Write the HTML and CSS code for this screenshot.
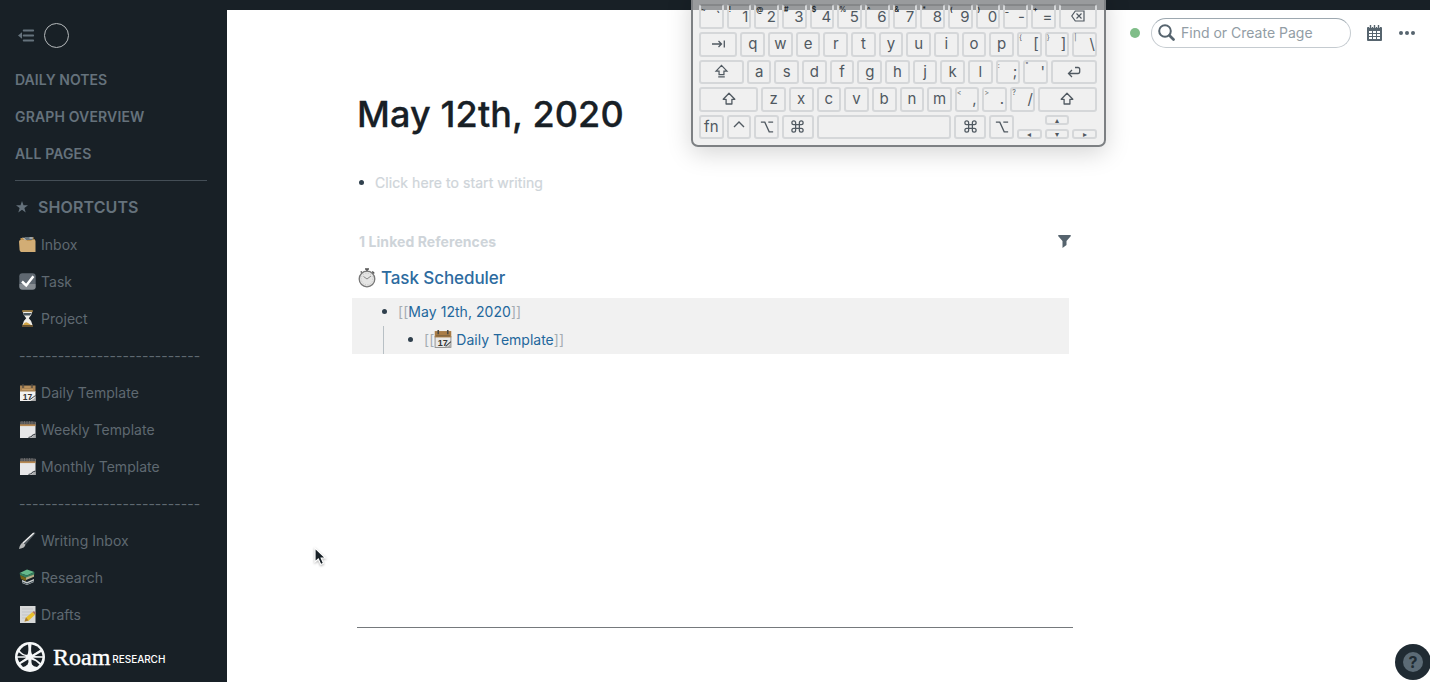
FILE: index.html
```html
<!DOCTYPE html>
<html lang="en">
<head>
<meta charset="utf-8">
<title>May 12th, 2020</title>
<link rel="stylesheet" href="styles.css">
</head>
<body>
<svg class="defs" width="0" height="0">
  <symbol id="notepad-emoji" viewBox="0 0 17 17">
    <rect x="1" y="1" width="15.500" height="16" fill="#e7e7e8"/><path d="M1 .5h15.500v4H1z" fill="#555556"/><path d="M1 4.200h15.500" stroke="#b88a53" stroke-width="1.800"/>
    <path d="M3 0v3M5.500 0v3M8 0v3M10.500 0v3M13 0v3" stroke="#777" stroke-width=".7"/><path d="M11 17q3-1 5.500-4v4z" fill="#a7a9ab"/><path d="M9.500 16.500q3-.5 4.500-2.500l2.500-1" fill="none" stroke="#3f444a" stroke-width="1.100"/>
  </symbol>
  <symbol id="key-option" viewBox="0 0 16 16"><path d="M1 2.500h4.500l5 11H15M9.500 2.500H15" fill="none" stroke="currentColor" stroke-width="1.500"/></symbol>
  <symbol id="key-command" viewBox="0 0 16 16"><path d="M6 4v8a2 2 0 1 1-2-2h8a2 2 0 1 1-2 2V4a2 2 0 1 1 2 2H4a2 2 0 1 1 2-2z" fill="none" stroke="currentColor" stroke-width="1.350"/></symbol>
  <symbol id="key-shift" viewBox="0 0 16 16"><path d="M8 2.200l5.800 6.100h-2.900v4.700H5.100V8.300H2.200z" fill="none" stroke="currentColor" stroke-width="1.300" stroke-linejoin="round"/></symbol>
</svg>
<div class="app">
  <aside class="sidebar">
    <div class="sidebar-tools">
      <svg width="17" height="13" viewBox="0 0 17 13"><path d="M5.700 1.500h9.500M5.700 6.500h9.500M5.700 11.500h9.500" stroke="#65727c" stroke-width="1.900" stroke-linecap="round"/><path d="M0 6.500L4 3.200v6.600z" fill="#65727c"/></svg>
      <span class="avatar"></span>
    </div>
    <nav class="primary"><a class="tight">DAILY NOTES</a><a>GRAPH OVERVIEW</a><a>ALL PAGES</a></nav>
    <div class="shortcuts-title"><svg width="12" height="12" viewBox="0 0 12 12"><path d="M6 0l1.500 4.200H12L8.400 6.900 9.700 11.400 6 8.700l-3.700 2.700 1.300-4.500L0 4.200h4.500z" fill="#65727c"/></svg><span>SHORTCUTS</span></div>
    <nav class="shortcuts">
      <a><svg viewBox="0 0 17 17"><path d="M1.500 6V2h4l1-1h8v2.200h1.500V7z" fill="#be9250"/><path d="M5.500 1h8v3h-8z" fill="#63717a"/><path d="M4 1.500l3 3M10.500 2h3" stroke="#ddd"/><path d="M0 5.500Q0 4 1.500 4H6l1 1h5l1-1h2.500q1 0 1 1v11H2Q.7 15 .6 14z" fill="#d2ad75"/></svg><span>Inbox</span></a>
      <a><svg viewBox="0 0 17 17"><rect x=".3" y=".3" width="16.400" height="16.400" rx="3" fill="#5f6871"/><path d="M.5 11h16v3q0 2.500-3 2.500h-10q-3 0-3-3z" fill="#858b91"/><path d="M3 8.500l4.200 4L14.400 3.200" fill="none" stroke="#fff" stroke-width="2.500"/></svg><span>Task</span></a>
      <a><svg viewBox="0 0 17 17"><path d="M3 .2h11v2H3zM3 15h11v2H3z" fill="#685331"/><path d="M4 2h9q0 3-3.200 6.300Q13 11 13.500 15h-10q.5-4 3.700-6.700Q4 5 4 2z" fill="#efede8"/><path d="M4.500 3l8 0-1.500 2.500-6 0z" fill="#4d5a61"/><path d="M4 15q2-4 5-2l3 2z" fill="#d1a442"/><path d="M3.500 1h10" stroke="#cca95f"/></svg><span>Project</span></a>
      <a class="dashes">----------------------------</a>
      <a><svg viewBox="0 0 17 17"><rect x="1" y="7" width="15.500" height="10" fill="#f3f2f0"/><rect x="1" y="1.500" width="15.500" height="6" fill="#a98455"/><path d="M4 0v4M13 0v4" stroke="#4b4842" stroke-width="1.300"/><path d="M6 3h5M3 5.500h11" stroke="#c59c66"/><text x="3.800" y="15.500" class="date-number">17</text><path d="M12 16.500q3-1 4.500-4v4.500h-5z" fill="#aaa"/><path d="M11 15.500l5.500-4" stroke="#444" stroke-width="1"/></svg><span>Daily Template</span></a>
      <a><svg><use href="#notepad-emoji"/></svg><span>Weekly Template</span></a>
      <a><svg><use href="#notepad-emoji"/></svg><span>Monthly Template</span></a>
      <a class="dashes">----------------------------</a>
      <a><svg viewBox="0 0 17 17"><path d="M0 17Q1 11.500 4 10.500l2.500 2Q6 16 0 17z" fill="#b5b7b7"/><path d="M4 10.500L15.500 0l1 1.300L6.500 12.800z" fill="#555d62"/><path d="M4 11L14.800 1" stroke="#eee" stroke-width="1.500"/></svg><span>Writing Inbox</span></a>
      <a><svg viewBox="0 0 17 17"><path d="M.7 4L8 .4l7.300 2.500L8 6.500z" fill="#65b98a"/><path d="M.7 4L8 6.500l7.300-3.600v2.600L7 9 1 6z" fill="#347f5d"/><path d="M1 6l6 3v3L2 10z" fill="#766516"/><path d="M7 8.500l8-3v2.300L7 11z" fill="#b4ad86"/><path d="M3 11l5 2 7-3v3l-7 3-5-2z" fill="#c8cccc"/><path d="M3 13l5 2 7-3" fill="none" stroke="#46545b"/></svg><span>Research</span></a>
      <a><svg viewBox="0 0 17 17"><path d="M1 0h15.500v17H1z" fill="#d7d8d8"/><path d="M3 3h11M3 6h11M3 9h8M3 12h4" stroke="#babfc2" stroke-width=".7"/><path d="M5.500 15.500l1.500-4L13.500 6l2.500 2.700-6.500 6z" fill="#e8bf2d"/><path d="M13.500 6l1.500-1 2 2-1 1.700z" fill="#ab7167"/><path d="M5.500 15.500l1.500-4 2.500 3z" fill="#a67b39"/></svg><span>Drafts</span></a>
    </nav>
    <footer class="brand">
      <svg width="30" height="30" viewBox="0 0 30 30"><circle cx="15" cy="15" r="15" fill="#f5f7f8"/><g fill="#182026"><path d="M13 2.500Q14 9 12.500 12.500 9 13.500 4.800 8.800 7.800 4 13 2.500z"/><path d="M16.500 2.500q5.500 1 8.800 5.300l-8 5q-1.900-3-.8-10.300z"/><path d="M3.800 10.300q3.700 3.700 7.200 3.900H2.400q.2-2 1.400-3.900z"/><path d="M26.300 10q1 2 1.200 4.300L19.500 14z"/><path d="M2.600 15.800h8.600L4.500 20.500Q3 18.500 2.600 15.800z"/><path d="M18 15.800h9.400q-.3 2.700-1.700 5.200Q21 17 18 15.800z"/><path d="M5.500 22l7.700-4.500q1 2.500-.7 5-2 2.300-4.500 2.500z"/><path d="M16.500 17.500q4.500 1 8 5l-2.500 2.500q-3.500-.5-5-2.500-.9-2-.5-5z"/></g><path d="M4 21.500L26 8.500" stroke="#f5f7f8" stroke-width="1.400"/></svg>
      <span class="roam">Roam</span><span class="research">RESEARCH</span>
    </footer>
  </aside>
  <main class="page">
    <header class="topbar">
      <i class="sync-dot"></i>
      <div class="search"><svg width="17" height="17" viewBox="0 0 17 17" fill="none" stroke="#56646e"><circle cx="7" cy="7" r="5.800" stroke-width="2"/><path d="M11.500 11.500l4 4" stroke-width="2.700" stroke-linecap="round"/></svg><span>Find or Create Page</span></div>
      <svg class="calendar-icon" width="15" height="16" viewBox="0 0 15 16"><path d="M0 3q0-1 1-1h13q1 0 1 1v12q0 1-1 1H1q-1 0-1-1z" fill="#56646e"/><path d="M3.500 0v3M7.500 0v3M11.500 0v3" stroke="#fff" stroke-width="2.600"/><path d="M3.500 0v3M7.500 0v3M11.500 0v3" stroke="#56646e" stroke-width="1.400"/><path d="M2 6h3v2H2zM6 6h3v2H6zM10 6h3v2h-3zM2 9h3v2H2zM6 9h3v2H6zM10 9h3v2h-3zM2 12h3v2H2zM6 12h3v2H6zM10 12h3v2h-3z" fill="#fff"/></svg>
      <svg class="more" width="16" height="4" viewBox="0 0 16 4" fill="#56646e"><circle cx="2" cy="2" r="2"/><circle cx="8" cy="2" r="2"/><circle cx="14" cy="2" r="2"/></svg>
    </header>
    <article class="note">
      <h1>May 12th, 2020</h1>
      <div class="placeholder"><i class="bullet"></i><span>Click here to start writing</span></div>
      <div class="refs-title"><span>1 Linked References</span><svg width="13" height="13" viewBox="0 0 13 13"><path d="M.7 0h11.600q.9.300.4 1.200L8.500 6v4l-4 3V6L.3 1.200Q-.2.300.7 0z" fill="#56646e"/></svg></div>
      <h2><svg width="18" height="20" viewBox="0 0 18 20"><path d="M7 1h4M9 1v3M14.200 3.500l2 2M3.800 3.500l-1 1" stroke="#555" stroke-width="1.700"/><circle cx="9" cy="11" r="7.800" fill="#e5e5e4" stroke="#777" stroke-width="1.300"/><circle cx="9" cy="11" r="5.800" fill="none" stroke="#bbb" stroke-width=".8" stroke-dasharray="1 1.500"/><path d="M5.500 8.500L9 11l4-3" fill="none" stroke="#888"/></svg><span>Task Scheduler</span></h2>
      <div class="references">
        <div class="reference"><i class="bullet"></i><span><b>[[</b>May 12th, 2020<b>]]</b></span></div>
        <div class="reference child"><i class="bullet"></i><span class="linked"><b>[[</b><svg width="18" height="18" viewBox="0 0 17 17"><rect x="1" y="6" width="15" height="10.500" fill="#e9e8e6" stroke="#777" stroke-width=".7"/><rect x=".7" y="1" width="15.600" height="6" fill="#a97c46"/><path d="M4 0v4M13 0v4" stroke="#4b4842" stroke-width="1.500"/><path d="M2 5.500h13" stroke="#79613f"/><text x="3.500" y="15" class="date-number">17</text><path d="M11 16.500q3-1 5-4v4z" fill="#aaa"/><path d="M11 15.500l5-4.500" stroke="#444" stroke-width="1"/></svg><span>Daily Template</span><b>]]</b></span></div>
      </div>
    </article>
    <hr class="divider">
  </main>
</div>

<section class="keyboard">
  <div class="row numbers"><kbd class="sym"><sup>~</sup>`</kbd><kbd class="sym"><sup>!</sup>1</kbd><kbd class="sym"><sup>@</sup>2</kbd><kbd class="sym"><sup>#</sup>3</kbd><kbd class="sym"><sup>$</sup>4</kbd><kbd class="sym"><sup>%</sup>5</kbd><kbd class="sym"><sup>^</sup>6</kbd><kbd class="sym"><sup>&amp;</sup>7</kbd><kbd class="sym"><sup>*</sup>8</kbd><kbd class="sym"><sup>(</sup>9</kbd><kbd class="sym"><sup>)</sup>0</kbd><kbd class="sym"><sup>_</sup>-</kbd><kbd class="sym"><sup>+</sup>=</kbd><kbd class="fill"><svg width="14" height="12" viewBox="0 0 14 12" fill="none" stroke="currentColor" stroke-width="1.200"><path d="M4.300 1H13v10H4.300L.8 6zM5.500 3.500l5 5M10.500 3.500l-5 5"/></svg></kbd></div>
  <div class="row"><kbd class="fill"><svg width="15" height="12" viewBox="0 0 15 12" fill="none" stroke="currentColor" stroke-width="1.300"><path d="M1 6h9M7.500 3l3 3-3 3M13.300 2.500v7"/></svg></kbd><kbd>q</kbd><kbd>w</kbd><kbd>e</kbd><kbd>r</kbd><kbd>t</kbd><kbd>y</kbd><kbd>u</kbd><kbd>i</kbd><kbd>o</kbd><kbd>p</kbd><kbd class="sym"><sup>{</sup>[</kbd><kbd class="sym"><sup>}</sup>]</kbd><kbd class="sym edge"><sup>|</sup>\</kbd></div>
  <div class="row"><kbd class="fill"><svg width="15" height="15" viewBox="0 0 16 16" fill="none" stroke="currentColor" stroke-width="1.300"><path d="M8 1.500l5.800 6h-3.200v3.800H5.400V7.500H2.200zM4.500 13.800h7"/></svg></kbd><kbd>a</kbd><kbd>s</kbd><kbd>d</kbd><kbd>f</kbd><kbd>g</kbd><kbd>h</kbd><kbd>j</kbd><kbd>k</kbd><kbd>l</kbd><kbd class="sym"><sup>:</sup>;</kbd><kbd class="sym"><sup>"</sup>'</kbd><kbd class="return"><svg width="14" height="12" viewBox="0 0 14 12" fill="none" stroke="currentColor" stroke-width="1.300"><path d="M5 4L1.500 7.500 5 11M2 7.500h9q1.700 0 1.700-2V3q0-1.500-1.700-1.500H8"/></svg></kbd></div>
  <div class="row"><kbd class="fill"><svg width="16" height="16"><use href="#key-shift"/></svg></kbd><kbd>z</kbd><kbd>x</kbd><kbd>c</kbd><kbd>v</kbd><kbd>b</kbd><kbd>n</kbd><kbd>m</kbd><kbd class="sym"><sup>&lt;</sup>,</kbd><kbd class="sym"><sup>&gt;</sup>.</kbd><kbd class="sym edge"><sup>?</sup>/</kbd><kbd class="fill"><svg width="16" height="16"><use href="#key-shift"/></svg></kbd></div>
  <div class="row"><kbd>fn</kbd><kbd><svg width="12" height="12" viewBox="0 0 12 12"><path d="M1 6l5-5 5 5" fill="none" stroke="currentColor" stroke-width="1.400"/></svg></kbd><kbd><svg width="14" height="14"><use href="#key-option"/></svg></kbd><kbd class="command"><svg width="15" height="15"><use href="#key-command"/></svg></kbd><kbd class="fill"></kbd><kbd class="command"><svg width="15" height="15"><use href="#key-command"/></svg></kbd><kbd><svg width="14" height="14"><use href="#key-option"/></svg></kbd><kbd class="arrow">◂</kbd><div class="vertical"><kbd class="arrow">▴</kbd><kbd class="arrow">▾</kbd></div><kbd class="arrow">▸</kbd></div>
</section>
<button class="help"><span>?</span></button>
<svg class="cursor" width="14" height="20" viewBox="0 0 14 20"><path d="M1 1v14l3.300-3 2.500 5.500 2.700-1.200L7.200 11h4.300z" fill="#182026" stroke="#fff" stroke-width="1.200"/></svg>
</body>
</html>
```
FILE: styles.css
```css
* { box-sizing: border-box; }
body { margin: 0; width: 1430px; height: 682px; overflow: hidden; position: relative; background: #182026; font-family: Inter, "Liberation Sans", sans-serif; color: #182026; }
h1, h2 { margin: 0; }
svg { display: block; flex: none; }
.defs { position: absolute; }
.date-number { font: 600 8.500px "Liberation Sans", sans-serif; fill: #333; }
.app { height: 682px; padding-top: 10px; display: flex; }

.sidebar { width: 227px; padding-top: 12px; color: #5f6971; }
.sidebar-tools { height: 26px; padding-left: 18px; display: flex; align-items: center; gap: 9px; }
.avatar { width: 25px; height: 25px; margin-top: 1px; border: 1px solid #b5b9bb; border-radius: 50%; }
.primary { margin: 13px 20px 0 15px; height: 120px; border-bottom: 1px solid #444e56; }
.primary a { display: block; height: 37px; line-height: 37px; font-size: 14px; font-weight: 600; color: #65727c; letter-spacing: .15px; }
.primary .tight { letter-spacing: .03px; }
.shortcuts-title { height: 45px; padding: 6px 0 0 16px; display: flex; align-items: center; gap: 10px; font-size: 16px; font-weight: 600; color: #65727c; letter-spacing: .1px; }
.shortcuts a { height: 37px; padding-left: 19px; display: flex; align-items: center; gap: 5px; font-size: 14px; letter-spacing: .03px; white-space: nowrap; }
.shortcuts .dashes { letter-spacing: .03px; }
.shortcuts svg { width: 17px; height: 17px; }
.brand { height: 48px; padding-left: 15px; display: flex; align-items: center; color: #fff; }
.roam { margin-left: 8px; font: 500 24px "Liberation Serif", serif; -webkit-text-stroke: .4px #fff; }
.research { margin: 4px 0 0 2px; font-size: 10px; font-weight: 500; letter-spacing: -.05px; }

.page { flex: 1; background: #fff; }
.topbar { height: 46px; padding-right: 15px; display: flex; align-items: center; justify-content: flex-end; }
.sync-dot { width: 10px; height: 10px; border-radius: 50%; background: #7fbd88; margin-right: 11px; }
.search { width: 200px; height: 30px; padding: 0 0 1px 6px; border: 1px solid #c5cbd0; border-top-color: #9da8b0; border-radius: 15px; display: flex; align-items: center; gap: 6px; font-size: 14px; color: #929da5; letter-spacing: 0; }
.calendar-icon { margin: 0 17px 0 16px; }
.note { margin-left: 130px; width: 716px; }
h1 { height: 94px; padding-top: 24px; font-size: 36px; line-height: 68px; font-weight: 500; letter-spacing: .12px; -webkit-text-stroke: .3px #182026; }
.bullet { flex: none; width: 5px; height: 5px; border-radius: 50%; background: #30404d; }
.placeholder { height: 65px; padding: 0 0 1px 2px; display: flex; align-items: center; gap: 11px; color: #ced4d9; font-size: 14px; letter-spacing: .07px; -webkit-text-stroke: .2px #ced4d9; }
.refs-title { height: 34px; margin-top: 9px; padding: 0 2px; display: flex; align-items: center; justify-content: space-between; color: #ced4d9; font-size: 14px; font-weight: 700; letter-spacing: .07px; }
h2 { height: 40px; padding: 0 0 1px 1px; display: flex; align-items: center; gap: 5px; font-size: 17px; font-weight: 500; color: #2d6b9f; letter-spacing: -.08px; }
.references { margin: 0 4px 0 -5px; height: 56px; background: #f1f1f1; }
.reference { height: 28px; padding: 0 0 2px 30px; display: flex; align-items: center; gap: 11px; color: #23679c; font-size: 14px; letter-spacing: .05px; }
.reference b { color: #a4acb1; font-weight: 400; }
.child { margin-left: 31px; padding-left: 24px; border-left: 1px solid #b8c0c5; }
.linked { display: flex; align-items: center; }
.linked svg + span { margin-left: 4px; letter-spacing: 0; }
.divider { margin: 273px 0 0 130px; width: 716px; border: 0; height: 1px; background: #75797c; }

.keyboard { position: absolute; left: 691px; top: -12px; width: 415px; height: 159px; padding: 14px 7px 0 6px; border: 2px solid #7d8083; border-radius: 0 0 7px 7px; background: linear-gradient(#999b9d 22px, #f0f0f0 22px); background-origin: border-box; box-shadow: 0 6px 24px rgba(0,0,0,.17); color: #505961; }
.row { height: 24.500px; display: flex; gap: 3px; margin-bottom: 3px; }
.numbers { margin-bottom: 3.500px; }
kbd { width: 24.670px; height: 24.500px; flex: none; display: flex; align-items: center; justify-content: center; position: relative; border: 2px solid #d5d7d9; border-radius: 3px; font: 15px/20px Inter, sans-serif; }
.sym { justify-content: flex-end; padding-right: 1px; }
.edge { padding-right: 0; }
.numbers .sym { padding-top: 2px; }
sup { position: absolute; left: 0; top: 0; font-size: 7px; line-height: 8px; }
.numbers kbd { border-color: #858789 #d5d7d9 #d5d7d9; }
.numbers sup { top: 0; color: #20272c; font-weight: 600; }
.fill { flex: 1; }
.return { width: 46px; }
.command { width: 32px; }
.arrow { height: 10.500px; align-self: flex-end; font-size: 8px; line-height: 8px; }
.vertical { display: flex; flex-direction: column; justify-content: space-between; }
.help { position: absolute; left: 1395px; top: 644px; width: 36px; height: 36px; padding: 0; border: 0; border-radius: 50%; display: flex; align-items: center; justify-content: center; background: #202b33; }
.help span { width: 20px; height: 20px; border-radius: 50%; background: #5c6b76; color: #202b33; font: 700 16px/20px Inter, sans-serif; }
.cursor { position: absolute; left: 314px; top: 547px; filter: drop-shadow(0 1px 1px rgba(0,0,0,.3)); }
```
